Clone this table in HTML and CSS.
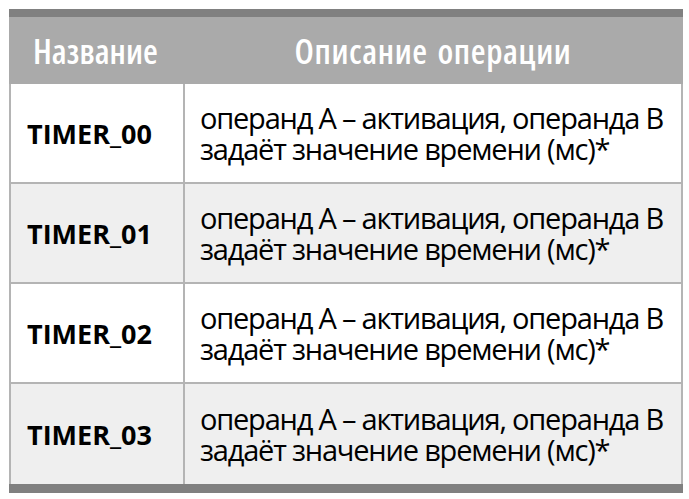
FILE: index.html
```html
<!DOCTYPE html>
<html lang="ru">
<head>
<meta charset="utf-8">
<link rel="stylesheet" href="styles.css">
</head>
<body>
<table class="ops">
  <thead>
    <tr><th class="name">Название</th><th class="desc">Описание операции</th></tr>
  </thead>
  <tbody>
    <tr><td class="name">TIMER_00</td><td class="desc">операнд А – активация, операнда В задаёт значение времени (мс)*</td></tr>
    <tr class="alt"><td class="name">TIMER_01</td><td class="desc">операнд А – активация, операнда В задаёт значение времени (мс)*</td></tr>
    <tr><td class="name">TIMER_02</td><td class="desc">операнд А – активация, операнда В задаёт значение времени (мс)*</td></tr>
    <tr class="alt"><td class="name">TIMER_03</td><td class="desc">операнд А – активация, операнда В задаёт значение времени (мс)*</td></tr>
  </tbody>
</table>
</body>
</html>
```
FILE: styles.css
```css
html, body { margin: 0; padding: 0; background: #ffffff; }
body { padding: 9px 6px 5px 9px; }
.ops {
  width: 674px;
  border-collapse: collapse;
  font-family: "Open Sans", "Noto Sans", sans-serif;
  border-top: 8px solid #808080;
  border-bottom: 9px solid #808080;
}
.ops th {
  background: #aaaaaa;
  color: #ffffff;
  font-weight: 600;
  font-size: 34px;
  font-stretch: 75%;
  height: 67px;
  padding: 0;
  text-align: center;
  border-left: 2px solid #aaaaaa;
  border-right: 2px solid #aaaaaa;
}
.ops th.name { text-align: left; padding-left: 22px; width: 150px; }
.ops th.desc { word-spacing: 3px; letter-spacing: 0.6px; }
.ops td {
  border: 2px solid #b4b4b4;
  height: 98px;
  padding: 0;
  font-size: 29px;
  line-height: 31px;
  letter-spacing: -1.2px;
  color: #000000;
}
.ops tr:first-child td { border-top: none; }
.ops tr:last-child td { border-bottom: none; height: 100px; }
.ops td.name { font-weight: 700; font-size: 27px; letter-spacing: 0; padding-left: 16px; }
.ops td.desc { padding-left: 15px; padding-right: 10px; }
.ops tr.alt td { background: #efefef; }
```
